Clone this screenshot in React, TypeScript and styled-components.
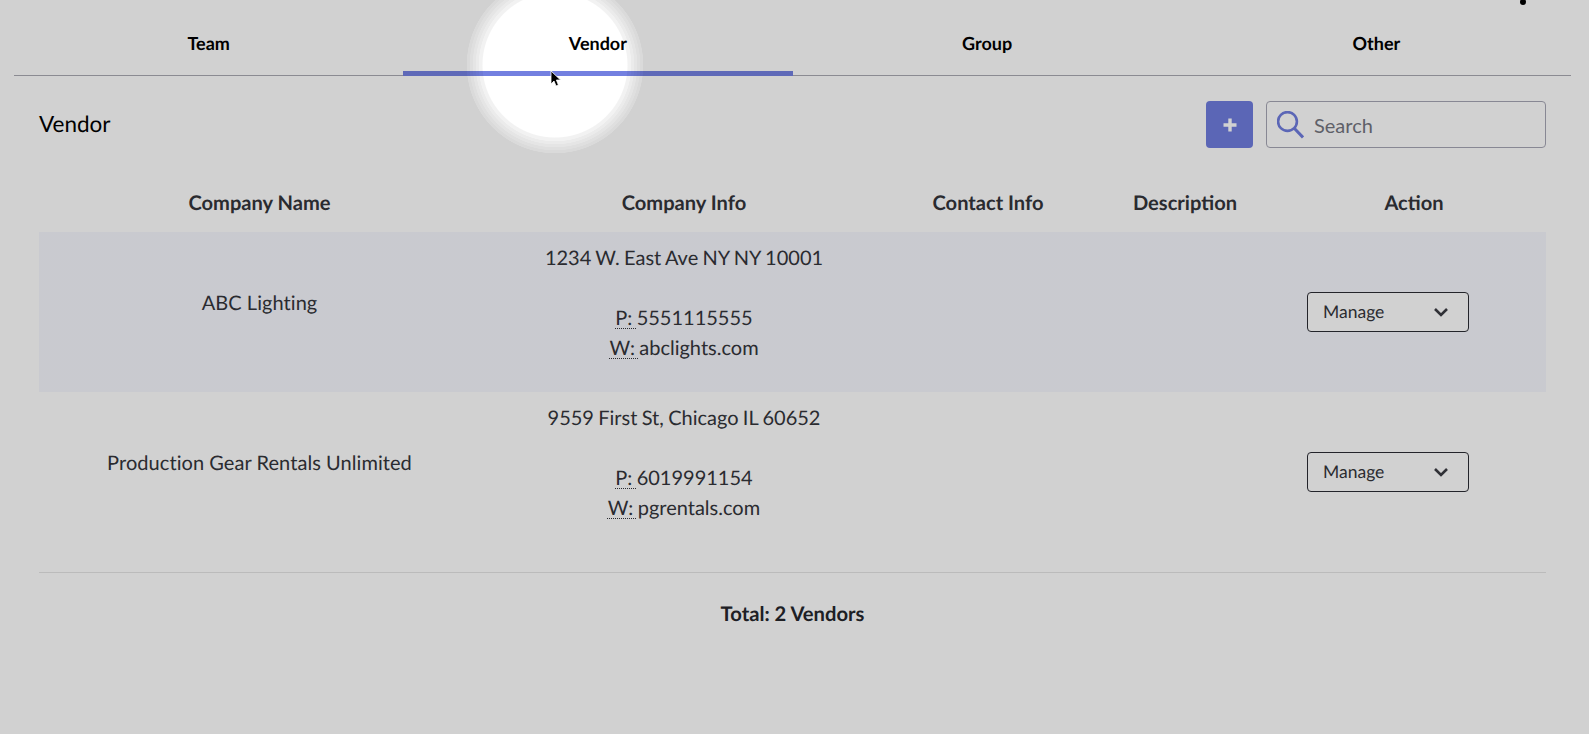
import React from 'react';
import styled, { createGlobalStyle } from 'styled-components';

const GlobalStyle = createGlobalStyle`
  html, body {
    margin: 0;
    padding: 0;
    background: #ffffff;
    font-family: 'Lato', 'Liberation Sans', sans-serif;
    text-rendering: geometricPrecision;
  }
`;

const Page = styled.div`
  position: relative;
  box-sizing: border-box;
  height: 734px;
  overflow: hidden;
  padding: 0 18px 0 14px;
  color: #33343a;
`;

const Tabs = styled.nav`
  display: flex;
  height: 75px;
  border-bottom: 1px solid #a9a9b2;
`;

const Tab = styled.div<{ $active?: boolean }>`
  flex: 1;
  box-sizing: border-box;
  height: 76px;
  padding-top: 14px;
  display: flex;
  align-items: center;
  justify-content: center;
  font-size: 18px;
  font-weight: 700;
  color: #000000;
  border-bottom: 5px solid ${(p) => (p.$active ? '#7380e0' : 'transparent')};
`;

const Content = styled.div`
  padding: 25px 25px 0;
`;

const Toolbar = styled.div`
  display: flex;
  align-items: center;
  height: 47px;
`;

const Title = styled.h2`
  flex: 1;
  margin: 0 0 3px;
  font-size: 22.5px;
  font-weight: 400;
  color: #000000;
`;

const AddButton = styled.button`
  width: 47px;
  height: 47px;
  padding: 0;
  border: none;
  border-radius: 4px;
  background: #6f7cde;
  display: flex;
  align-items: center;
  justify-content: center;
`;

const SearchBox = styled.label`
  box-sizing: border-box;
  width: 280px;
  height: 47px;
  margin-left: 13px;
  padding-left: 10px;
  display: flex;
  align-items: center;
  gap: 10px;
  border: 1px solid #a6a6b4;
  border-radius: 4px;
`;

const SearchInput = styled.input`
  flex: 1;
  min-width: 0;
  border: none;
  outline: none;
  background: transparent;
  padding: 0;
  margin-top: 1px;
  font-family: inherit;
  font-size: 20px;
  &::placeholder {
    color: #74757f;
    opacity: 1;
  }
`;

const Table = styled.table`
  width: 100%;
  margin-top: 19px;
  table-layout: fixed;
  border-collapse: collapse;
`;

const HeadCell = styled.th`
  box-sizing: border-box;
  height: 65px;
  padding: 7px 0 0;
  font-size: 20.1px;
  font-weight: 700;
  text-align: center;
  color: #33343a;
`;

const Row = styled.tr<{ $shaded?: boolean }>`
  background: ${(p) => (p.$shaded ? '#f5f6fd' : 'transparent')};
`;

const Cell = styled.td`
  box-sizing: border-box;
  height: 160px;
  padding: 0;
  font-size: 20px;
  line-height: 30px;
  text-align: center;
  vertical-align: middle;
`;

const NameCell = styled(Cell)`
  padding-bottom: 18px;
  letter-spacing: 0.06px;
`;

const InfoCell = styled(Cell)`
  padding-top: 11px;
  vertical-align: top;
  word-spacing: -0.8px;
`;

const Label = styled.abbr`
  text-decoration: underline dotted;
  text-underline-offset: 3px;
  text-decoration-thickness: 1px;
`;

const Blank = styled.div`
  height: 30px;
`;

const ManageSelect = styled.div`
  box-sizing: border-box;
  width: 162px;
  height: 40px;
  margin-left: 25px;
  padding: 0 19px 0 15px;
  display: flex;
  align-items: center;
  justify-content: space-between;
  background: #ffffff;
  border: 1px solid #2b2c33;
  border-radius: 4px;
  font-size: 17.5px;
`;

const Footer = styled.div`
  margin-top: 20px;
  padding-top: 26px;
  border-top: 1px solid #e4e4e4;
  font-size: 20.2px;
  font-weight: 700;
  line-height: 30px;
  text-align: center;
  color: #25262c;
`;

const Dot = styled.span`
  position: absolute;
  top: -1px;
  left: 1520px;
  width: 6px;
  height: 6px;
  border-radius: 50%;
  background: #000000;
`;

// dimmed page with a bright spot where the click happened
const Spotlight = styled.div`
  position: absolute;
  inset: 0;
  pointer-events: none;
  background: radial-gradient(
    circle at 555px 65px,
    rgba(0, 0, 0, 0) 72px,
    rgba(0, 0, 0, 0.05) 73px,
    rgba(0, 0, 0, 0.05) 76px,
    rgba(0, 0, 0, 0.08) 76.5px,
    rgba(0, 0, 0, 0.08) 79px,
    rgba(0, 0, 0, 0.1) 79.5px,
    rgba(0, 0, 0, 0.1) 82px,
    rgba(0, 0, 0, 0.125) 82.5px,
    rgba(0, 0, 0, 0.125) 85px,
    rgba(0, 0, 0, 0.145) 85.5px,
    rgba(0, 0, 0, 0.145) 88px,
    rgba(0, 0, 0, 0.18) 88.5px
  );
`;

const Cursor = styled.svg`
  position: absolute;
  left: 550px;
  top: 70px;
`;

const vendors = [
  { name: 'ABC Lighting', address: '1234 W. East Ave NY NY 10001', phone: '5551115555', web: 'abclights.com' },
  { name: 'Production Gear Rentals Unlimited', address: '9559 First St, Chicago IL 60652', phone: '6019991154', web: 'pgrentals.com' },
];

export default function App() {
  return (
    <>
      <GlobalStyle />
      <Page>
        <Tabs>
          <Tab>Team</Tab>
          <Tab $active>Vendor</Tab>
          <Tab>Group</Tab>
          <Tab>Other</Tab>
        </Tabs>

        <Content>
          <Toolbar>
            <Title>Vendor</Title>
            <AddButton aria-label="Add">
              <svg width="16" height="16" viewBox="0 0 16 16">
                <path d="M8 1.5v13M1.5 8h13" stroke="#ffffff" strokeWidth="3.4" />
              </svg>
            </AddButton>
            <SearchBox>
              <svg width="27" height="28" viewBox="0 0 27 28" fill="none" stroke="#6f7cde">
                <circle cx="10.5" cy="10.5" r="9.4" strokeWidth="2.6" />
                <path d="M17 17l9 9.5" strokeWidth="3" />
              </svg>
              <SearchInput placeholder="Search" />
            </SearchBox>
          </Toolbar>

          <Table>
            <colgroup>
              <col width="441" />
              <col width="408" />
              <col width="200" />
              <col width="194" />
              <col width="264" />
            </colgroup>
            <thead>
              <tr>
                <HeadCell>Company Name</HeadCell>
                <HeadCell>Company Info</HeadCell>
                <HeadCell>Contact Info</HeadCell>
                <HeadCell>Description</HeadCell>
                <HeadCell>Action</HeadCell>
              </tr>
            </thead>
            <tbody>
              {vendors.map((vendor, i) => (
                <Row key={vendor.name} $shaded={i === 0}>
                  <NameCell>{vendor.name}</NameCell>
                  <InfoCell>
                    {vendor.address}
                    <Blank />
                    <div><Label>P: </Label>{vendor.phone}</div>
                    <div><Label>W: </Label>{vendor.web}</div>
                  </InfoCell>
                  <Cell />
                  <Cell />
                  <Cell>
                    <ManageSelect>
                      Manage
                      <svg width="16" height="10" viewBox="0 0 16 10" fill="none">
                        <path d="M2 2l6 6 6-6" stroke="#3a3b42" strokeWidth="2.6" />
                      </svg>
                    </ManageSelect>
                  </Cell>
                </Row>
              ))}
            </tbody>
          </Table>

          <Footer>Total: 2 Vendors</Footer>
        </Content>

        <Dot />
        <Spotlight />
        <Cursor width="12" height="18" viewBox="0 0 12 18">
          <path d="M1 1v13l3-3 2 5 2.4-1-2-5h4.2z" fill="#000000" stroke="#ffffff" strokeWidth="0.8" />
        </Cursor>
      </Page>
    </>
  );
}
